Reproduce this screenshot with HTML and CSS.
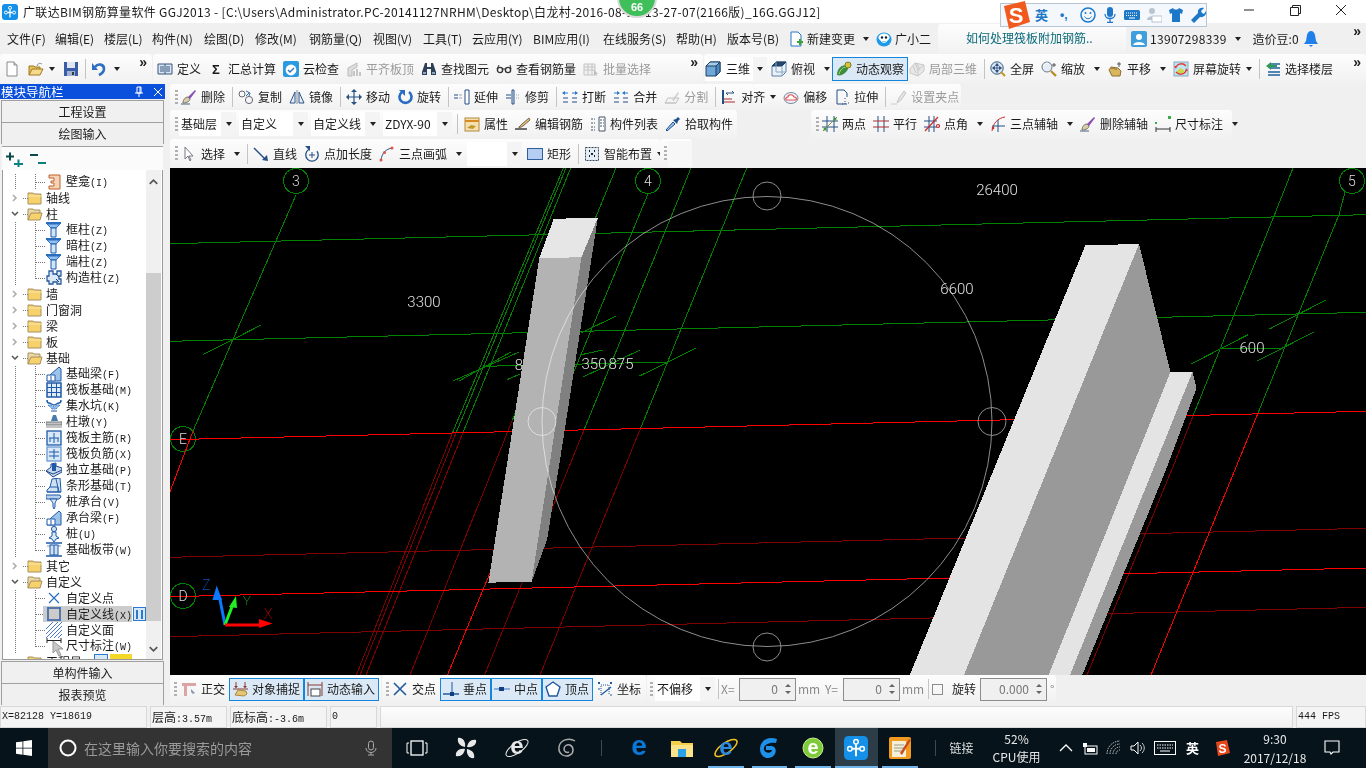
FILE: index.html
```html
<!DOCTYPE html>
<html lang="zh">
<head>
<meta charset="utf-8">
<title>广联达BIM钢筋算量软件 GGJ2013</title>
<link rel="stylesheet" href="styles.css">
</head>
<body>
<svg class="defs" aria-hidden="true">
<defs>
<symbol id="i-new" viewBox="0 0 16 16"><path d="M3 1h7l3 3v11H3z" fill="#fff" stroke="#8a8a8a"/><path d="M10 1v3h3" fill="#ddd" stroke="#8a8a8a"/></symbol>
<symbol id="i-open" viewBox="0 0 16 16"><path d="M1 14V5h5l1 1h5v2" fill="#e8c060" stroke="#a07820"/><path d="M1 14l3-6h11l-3 6z" fill="#f6d98a" stroke="#a07820"/><path d="M9 5c1-3 3-3 5-2" stroke="#7a8aa0" fill="none"/></symbol>
<symbol id="i-save" viewBox="0 0 16 16"><path d="M1 1h14v14H1z" fill="#3a5da8"/><path d="M4 1h8v6H4z" fill="#dfe6f2"/><path d="M4 10h8v5H4z" fill="#9fb2d0"/><path d="M9 11h2v3H9z" fill="#334"/></symbol>
<symbol id="i-undo" viewBox="0 0 16 16"><path d="M4 6c3-4 9-3 9 2 0 3-3 5-5 6" fill="none" stroke="#2e6fc0" stroke-width="2.6"/><path d="M1 2v7h6z" fill="#2e6fc0"/></symbol>
<symbol id="i-def" viewBox="0 0 16 16"><path d="M1 3h14v10H1z" fill="#dbe5f1" stroke="#35577f"/><path d="M3 6h4M3 8h4M3 10h4M9 6h4M9 8h4M9 10h4M8 3v10" stroke="#35577f"/></symbol>
<symbol id="i-cloud" viewBox="0 0 16 16"><rect x="0" y="0" width="16" height="16" rx="2" fill="#2a9be0"/><circle cx="8" cy="9" r="5.4" fill="#fff"/><path d="M5 9l2 2 4-4" stroke="#2a78c0" stroke-width="1.4" fill="none"/></symbol>
<symbol id="i-flush" viewBox="0 0 16 16"><path d="M2 7l9-5v4l-5 3v6H2z" fill="#ddd" stroke="#bbb"/><path d="M7 10h2v5H7zM10 8h2v7h-2zM13 11h2v4h-2z" fill="#c6c6c6"/></symbol>
<symbol id="i-binoc" viewBox="0 0 16 16"><path d="M4 2h2v4h4V2h2l3 9v3h-5V8H6v6H1v-3z" fill="#2f3f55"/><path d="M2 11h3v2H2zM11 11h3v2h-3z" fill="#8fa6c8"/></symbol>
<symbol id="i-glass" viewBox="0 0 16 16"><circle cx="4" cy="9" r="2.6" fill="none" stroke="#333" stroke-width="1.4"/><circle cx="12" cy="9" r="2.6" fill="none" stroke="#333" stroke-width="1.4"/><path d="M6 8h4M1 8l2-4M15 8l-1-4" stroke="#333"/></symbol>
<symbol id="i-batch" viewBox="0 0 16 16"><path d="M1 3h11v11H1z" fill="#f2f2f2" stroke="#c4c4c4"/><path d="M1 6h11M1 9h11M5 3v11M9 3v11" stroke="#c4c4c4"/><path d="M11 9l4 4-2 0 1 2-1 0-1-2-1 1z" fill="#bbb"/></symbol>
<symbol id="i-cube" viewBox="0 0 16 16"><path d="M1 5l4-4h10v10l-4 4H1z" fill="#6fa8d8" stroke="#1d3f66"/><path d="M1 5l4-4h10l-4 4z" fill="#a7cdea" stroke="#1d3f66"/><path d="M11 5v10l4-4V1z" fill="#4f88bd" stroke="#1d3f66"/></symbol>
<symbol id="i-top" viewBox="0 0 16 16"><path d="M1 5l4-4h10v10l-4 4H1z" fill="#eaf2f9" stroke="#5a7fa3"/><path d="M1 5l4-4h10l-4 4z" fill="#27496e" stroke="#1d3f66"/><path d="M11 5v10M5 1v10h10" stroke="#8aa7c4" fill="none"/></symbol>
<symbol id="i-orbit" viewBox="0 0 16 16"><path d="M1 14c0-6 4-10 9-10 3 0 3 4 0 7-3 3-6 4-9 3z" fill="#3d8f3d"/><path d="M3 13c1-4 4-7 7-7" stroke="#a6d98a" fill="none"/><circle cx="12" cy="4" r="3" fill="#d8c43a" stroke="#7a7a20"/></symbol>
<symbol id="i-local" viewBox="0 0 16 16"><path d="M1 8l5-6 9 2v6l-6 5-8-3z" fill="#e8e8e8" stroke="#c8c8c8"/><path d="M6 2l3 7v6M9 9l6-5M4 5l3 7M8 3l3 6" stroke="#c8c8c8" fill="none"/></symbol>
<symbol id="i-full" viewBox="0 0 16 16"><circle cx="7" cy="7" r="6.2" fill="#dbe6f4" stroke="#35577f"/><path d="M7 3v8M3 7h8M7 2.5l-1.500 2h3zM7 11.500l-1.500-2h3zM2.500 7l2-1.500v3zM11.500 7l-2-1.500v3z" stroke="#26487a" fill="#26487a" stroke-width=".8"/><path d="M11 11l4 4" stroke="#c59a20" stroke-width="2"/></symbol>
<symbol id="i-zoom" viewBox="0 0 16 16"><circle cx="6" cy="6" r="5" fill="#e6edf5" stroke="#6a7a8a"/><path d="M3 5c0-2 2-3 4-3" stroke="#fff" fill="none"/><path d="M10 10l5 5" stroke="#b58a20" stroke-width="2.2"/><path d="M13 2v4M11 4h4" stroke="#555"/></symbol>
<symbol id="i-pan" viewBox="0 0 16 16"><path d="M2 9l2-3 7 1 3 3-1 5H5z" fill="#d9b560" stroke="#8a7030"/><path d="M4 8c2-2 4 1 6 0" stroke="#8a7030" fill="none"/><path d="M12 1v5M10 3h4" stroke="#556"/></symbol>
<symbol id="i-rot" viewBox="0 0 16 16"><rect x="1" y="1" width="14" height="14" fill="#bfe4f6" stroke="#8ab"/><path d="M4 10l3-3 4 2v3H4z" fill="#c9d94a"/><path d="M13 5A6 6 0 0 0 3 6M3 11a6 6 0 0 0 10-1" stroke="#e23b2e" stroke-width="1.300" fill="none"/><path d="M1 5l3 0-1 3zM15 10l-3 0 1-3z" fill="#e23b2e"/></symbol>
<symbol id="i-floor" viewBox="0 0 16 16"><path d="M5 3h10M5 7h10M3 11h12M3 14h12" stroke="#1e5f9c" stroke-width="1.300"/><path d="M1 5l5-4v3h6v2H6v3z" fill="#2f9a55"/></symbol>
<symbol id="i-erase" viewBox="0 0 16 16"><path d="M0 15h9" stroke="#47607a"/><path d="M2 14c0-3 2-6 5-6l2 2c0 2-3 4-7 4z" fill="#d9cdb0" stroke="#776"/><path d="M7 8l7-7 1 1-6 8z" fill="#8a4fb0"/></symbol>
<symbol id="i-copy" viewBox="0 0 16 16"><circle cx="4" cy="5" r="3" fill="none" stroke="#667"/><circle cx="11" cy="11" r="3.600" fill="none" stroke="#667"/><path d="M8 2l4 2-1 3M11 4L8 7" stroke="#3a6aa8" fill="none"/></symbol>
<symbol id="i-mirror" viewBox="0 0 16 16"><path d="M6 3L1 14h5zM10 3l5 11h-5z" fill="#e6eef7" stroke="#2f5587"/><path d="M8 1v14" stroke="#889"/></symbol>
<symbol id="i-move" viewBox="0 0 16 16"><path d="M8 1v14M1 8h14" stroke="#26507f" stroke-width="1.200"/><path d="M8 0l3 3H5zM8 16l3-3H5zM0 8l3-3v6zM16 8l-3-3v6z" fill="#26507f"/></symbol>
<symbol id="i-rotb" viewBox="0 0 16 16"><path d="M5 3a6 6 0 1 0 7 0" fill="none" stroke="#2a6cc0" stroke-width="2.600"/><path d="M2 1h6v6z" fill="#2a6cc0"/></symbol>
<symbol id="i-ext" viewBox="0 0 16 16"><path d="M0 6h4M0 9h4" stroke="#234f85" stroke-width="1.200"/><path d="M5 6h3M5 9h3" stroke="#9ab" /><path d="M11 1h4v14h-4z" fill="#fff" stroke="#234f85"/></symbol>
<symbol id="i-trim" viewBox="0 0 16 16"><path d="M1 6h5M1 9h5" stroke="#234f85" stroke-width="1.200"/><path d="M7 1h2v14H7z" fill="#dfe9f5" stroke="#234f85"/><path d="M11 6h4M11 9h4" stroke="#9ab" stroke-dasharray="1 1"/></symbol>
<symbol id="i-break" viewBox="0 0 16 16"><path d="M1 9h5M10 9h5M1 13h5M10 13h5" stroke="#234f85" stroke-width="1.200"/><path d="M1 4h5M10 4h5" stroke="#2a7ad0"/><path d="M0 4l3-2v4zM16 4l-3-2v4z" fill="#2a7ad0"/></symbol>
<symbol id="i-merge" viewBox="0 0 16 16"><path d="M1 9h5M10 9h5M1 13h5M10 13h5" stroke="#234f85" stroke-width="1.200"/><path d="M1 4h5M10 4h5" stroke="#2a7ad0"/><path d="M7 4L4 2v4zM9 4l3-2v4z" fill="#2a7ad0"/></symbol>
<symbol id="i-split" viewBox="0 0 16 16"><path d="M1 14l3-5h11l-3 5zM1 14h11" fill="#f3f3f3" stroke="#c2c2c2"/><path d="M8 11l6-8 1 1-5 8z" fill="#d0d0d0"/></symbol>
<symbol id="i-align" viewBox="0 0 16 16"><path d="M1 1h2v14H1z" fill="#234f85"/><path d="M5 4h8l-2-2M5 4l2 2" fill="none" stroke="#234f85"/><path d="M3 13h11M3 10h8" stroke="#b02a2a" stroke-width="1.200"/></symbol>
<symbol id="i-offs" viewBox="0 0 16 16"><ellipse cx="8" cy="9" rx="7" ry="5.500" fill="#eef" stroke="#7a8a9a"/><path d="M3 11c-1-2 1-3 2-3 0-3 5-3 6 0 2 0 3 2 2 3z" fill="#fff" stroke="#e2524a" stroke-width="1.200"/></symbol>
<symbol id="i-stretch" viewBox="0 0 16 16"><path d="M3 1h7l3 3v4M3 1v14h10" fill="none" stroke="#234f85"/><path d="M11 9v2M11 12v3M14 14h2M8 15h2" stroke="#234f85" stroke-dasharray="1 1"/></symbol>
<symbol id="i-grip" viewBox="0 0 16 16"><path d="M0 15h6" stroke="#ccc"/><path d="M6 14l2-5 5-7 2 2-5 7z" fill="#e4e4e4" stroke="#c6c6c6"/></symbol>
<symbol id="i-prop" viewBox="0 0 16 16"><rect x="1" y="2" width="14" height="13" fill="#f6e0b0" stroke="#b08a40"/><path d="M1 5h14" stroke="#d88a20" stroke-width="2"/><path d="M3 12l4-3 5 1-3 3z" fill="#c09a30"/></symbol>
<symbol id="i-rebar" viewBox="0 0 16 16"><path d="M0 13h12" stroke="#222" stroke-width="1.300"/><path d="M4 11l3-3 7-6 1 2-7 6-4 2z" fill="#e0c070" stroke="#765"/></symbol>
<symbol id="i-list" viewBox="0 0 16 16"><path d="M9 1h6v14H9z" fill="#fff" stroke="#456"/><path d="M1 3h4M1 7h4M1 11h4M1 14h4M10 4h4M10 7h4M10 10h4" stroke="#456" stroke-dasharray="2 1"/></symbol>
<symbol id="i-pick" viewBox="0 0 16 16"><path d="M2 15l-1-1 7-8 2 2z" fill="#9cc6ec" stroke="#1d4f8c"/><path d="M8 4l4 4 1-3 2-2-2-2-2 2z" fill="#1d4f8c"/></symbol>
<symbol id="i-two" viewBox="0 0 16 16"><path d="M5 0v16M12 0v16M0 5h16M0 11h16" stroke="#234f85"/><path d="M1 15L15 1" stroke="#8a8a40"/><circle cx="3" cy="13" r="1.500" fill="#3a9a3a"/><circle cx="13" cy="3" r="1.500" fill="#3a9a3a"/></symbol>
<symbol id="i-par" viewBox="0 0 16 16"><path d="M5 0v16M11 0v16" stroke="#234f85"/><path d="M0 5h16M0 11h16" stroke="#b02a2a"/></symbol>
<symbol id="i-ang" viewBox="0 0 16 16"><path d="M5 0v16M10 0v16M0 5h13M0 11h13" stroke="#234f85"/><path d="M1 15L14 1" stroke="#d02a2a" stroke-width="1.200"/><circle cx="14" cy="10" r="1.500" fill="none" stroke="#d02a2a" stroke-width="1.200"/></symbol>
<symbol id="i-tax" viewBox="0 0 16 16"><path d="M2 15C3 7 8 2 15 1" fill="none" stroke="#d02a2a"/><path d="M8 4v12M2 10h13" stroke="#234f85"/><circle cx="3" cy="12" r="1.300" fill="#d02a2a"/></symbol>
<symbol id="i-dim" viewBox="0 0 16 16"><rect x="0" y="6" width="2" height="2" fill="#3aaa4a"/><rect x="13" y="0" width="3" height="3" fill="#3aaa4a"/><path d="M1 11v5M15 11v5M1 13h14" stroke="#333"/></symbol>
<symbol id="i-sel" viewBox="0 0 16 16"><path d="M4 1v12l3-3 2 5 1-1-2-4h4z" fill="#fff" stroke="#778"/></symbol>
<symbol id="i-line" viewBox="0 0 16 16"><path d="M1 2l12 12" stroke="#234f85" stroke-width="1.500"/><path d="M15 15l-6-1 5-5z" fill="#234f85"/></symbol>
<symbol id="i-ptl" viewBox="0 0 16 16"><circle cx="8" cy="9" r="6.200" fill="none" stroke="#234f85" stroke-width="1.300" stroke-dasharray="26 8"/><path d="M8 6v6M5 9h6" stroke="#234f85"/><path d="M1 0h5v5z" fill="#234f85"/></symbol>
<symbol id="i-arc" viewBox="0 0 16 16"><path d="M2 14C3 7 7 3 13 2" fill="none" stroke="#234f85"/><circle cx="2" cy="14" r="1.500" fill="#e0524a"/><circle cx="5.500" cy="6.500" r="1.500" fill="#e0524a"/><circle cx="13" cy="2" r="1.500" fill="#e0524a"/></symbol>
<symbol id="i-rect" viewBox="0 0 16 16"><rect x="0.500" y="2.500" width="15" height="11" fill="#b4cdf0" stroke="#2f5f9f"/></symbol>
<symbol id="i-smart" viewBox="0 0 16 16"><rect x="1.500" y="1.500" width="13" height="13" fill="#e4ecf6" stroke="#345" stroke-dasharray="2 1"/><path d="M5 5h1M10 5h1M5 10h1M10 10h1M8 7v2" stroke="#123" stroke-width="2"/></symbol>
<symbol id="i-ortho" viewBox="0 0 16 16"><path d="M1 2h14v3H6v10H3V5H1z" fill="#d9a5a5"/><path d="M10 8l4 4-2 1-2-2z" fill="#8a9aaa"/></symbol>
<symbol id="i-snap" viewBox="0 0 16 16"><path d="M4 1v6M13 1v6M1 8h15" stroke="#8a3a30"/><path d="M4 7l-2-2h4zM13 7l-2-2h4z" fill="#8a3a30"/><path d="M3 14l3-5 8 1 1 3-3 2z" fill="#e3c777" stroke="#a88a3a"/></symbol>
<symbol id="i-dyn" viewBox="0 0 16 16"><path d="M1 1v14M15 1v14M1 4h14" stroke="#8a3a30"/><rect x="4" y="8" width="9" height="7" fill="#fff" stroke="#444"/></symbol>
<symbol id="i-x" viewBox="0 0 16 16"><path d="M2 2l12 12M14 2L2 14" stroke="#1f5a9e" stroke-width="1.600"/></symbol>
<symbol id="i-perp" viewBox="0 0 16 16"><path d="M0 13h16" stroke="#1f5a9e" stroke-width="1.500"/><path d="M9 1v12" stroke="#1f5a9e"/><rect x="7" y="11" width="4" height="4" fill="#123f80"/></symbol>
<symbol id="i-mid" viewBox="0 0 16 16"><path d="M0 8h16" stroke="#6e9ad4" stroke-width="1.500"/><rect x="5" y="6" width="5" height="4" fill="#123f80"/></symbol>
<symbol id="i-ver" viewBox="0 0 16 16"><path d="M8 1l7 5-3 9H4L1 6z" fill="#fff" stroke="#1f5a9e" stroke-width="1.400"/></symbol>
<symbol id="i-coord" viewBox="0 0 16 16"><path d="M4 14V4h8v10" fill="none" stroke="#1f5a9e" stroke-dasharray="1 1"/><path d="M4 14l10-8" stroke="#1f5a9e" stroke-width="1.300"/><path d="M1 1l2 2M3 1L1 3M13 1l2 2M15 1l-2 2M1 8h2M13 14h2" stroke="#1f5a9e"/></symbol>
<symbol id="i-changes" viewBox="0 0 16 16"><path d="M3 1h7l3 3v11H3z" fill="#fff" stroke="#2a78c0"/><path d="M9 10h2V8h2v2h2v2h-2v2h-2v-2H9z" fill="#3aa03a"/></symbol>
<symbol id="i-gxe" viewBox="0 0 16 16"><ellipse cx="8" cy="8.500" rx="7.500" ry="7" fill="#1e9be8"/><ellipse cx="8" cy="6.500" rx="5.500" ry="4" fill="#fff"/><circle cx="6" cy="6.500" r="1.200" fill="#123"/><circle cx="10" cy="6.500" r="1.200" fill="#123"/><path d="M5 10c2 2 4 2 6 0" stroke="#fff" fill="none"/></symbol>
<symbol id="i-user" viewBox="0 0 16 16"><rect width="16" height="16" rx="2" fill="#3f9fdc"/><circle cx="8" cy="6" r="3" fill="#fff"/><path d="M2 14c1-4 11-4 12 0z" fill="#fff"/></symbol>
<symbol id="i-bell" viewBox="0 0 16 16"><path d="M8 0c2 0 3 1 4 4l1 6 2 3H1l2-3 1-6c1-3 2-4 4-4z" fill="#1e80e8"/><path d="M6 14h4l-2 2z" fill="#1e80e8"/></symbol>
<symbol id="i-app" viewBox="0 0 16 16"><rect width="16" height="16" rx="3" fill="#1590e8"/><path d="M8 5.500v8M5.500 8.500h5" stroke="#fff" stroke-width="1.300"/><circle cx="8" cy="3.800" r="1.500" fill="none" stroke="#fff"/><circle cx="3.900" cy="8.500" r="1.500" fill="none" stroke="#fff"/><circle cx="12.100" cy="8.500" r="1.500" fill="none" stroke="#fff"/></symbol>
<symbol id="t-niche" viewBox="0 0 16 16"><path d="M3 1h11v14H3v-3h5V9H5V7h3V4H3z" fill="#f4d4b8" stroke="#c0602a"/></symbol>
<symbol id="t-col" viewBox="0 0 16 16"><path d="M0 0h15v2H0z" fill="#2a6cc0"/><path d="M1 2h13L10 6H5z" fill="#8fc1f0" stroke="#2a6cc0"/><path d="M5 6h5v9H5z" fill="#cfe4f8" stroke="#1e5aa8"/></symbol>
<symbol id="t-gz" viewBox="0 0 16 16"><path d="M3 1h4v3h4V1h4v5h-2v3h2v5h-4v-2H7v2H3v-3H1V6h2z" fill="#dbe8f6" stroke="#2a5a9c" stroke-width="1.300"/><path d="M10 4l3 3M10 9l3 3" stroke="#123f80"/></symbol>
<symbol id="t-beam" viewBox="0 0 16 16"><path d="M1 15l3-6 9-8 2 2v12z" fill="#9cc3ea" stroke="#1e5aa8"/><path d="M1 9h8v6H1zM5 10v5" fill="#fff" stroke="#1e5aa8"/></symbol>
<symbol id="t-raft" viewBox="0 0 16 16"><rect x="1" y="1" width="14" height="14" fill="#dfeaf7" stroke="#1e5aa8" stroke-width="1.500"/><path d="M5.500 1v14M10.500 1v14M1 5.500h14M1 10.500h14" stroke="#1e5aa8"/></symbol>
<symbol id="t-pit" viewBox="0 0 16 16"><path d="M1 2c0 3 2 3 2 3 2 0 3 2 5 2s3-2 5-2c0 0 2 0 2-3" fill="none" stroke="#1e5aa8" stroke-width="1.500"/><path d="M2 7l4 4h4l4-4-3 0-3 2-3-2z" fill="#8fc1f0" stroke="#1e5aa8" stroke-dasharray="1 1"/><path d="M5 13h6" stroke="#1e5aa8"/></symbol>
<symbol id="t-pier" viewBox="0 0 16 16"><path d="M7 1h3l2 6H5z" fill="#4a7ab0"/><rect x="0" y="8" width="16" height="3" fill="#c0c4c8" stroke="#777"/><path d="M0 13h16" stroke="#888"/></symbol>
<symbol id="t-r1" viewBox="0 0 16 16"><rect x="1" y="1" width="14" height="14" fill="#d8e8f8" stroke="#1e5aa8" stroke-width="1.300"/><path d="M8 3v10M3 8h10M4 8v4M12 8v4" stroke="#1e5aa8" fill="none"/></symbol>
<symbol id="t-r2" viewBox="0 0 16 16"><rect x="1" y="1" width="14" height="14" fill="#d8e8f8" stroke="#6a9ad0" stroke-width="1.300"/><path d="M8 3v10M3 6h10M3 10h10" stroke="#1e5aa8"/></symbol>
<symbol id="t-iso" viewBox="0 0 16 16"><path d="M0 9l5-4v-3l5-1v3l6 2v4l-9 5z" fill="#c8d8ec" stroke="#1e4a8c"/><path d="M6 2h4v7H6z" fill="#1e5aa8"/><path d="M0 9l7 3 9-4" stroke="#1e4a8c" fill="none"/></symbol>
<symbol id="t-strip" viewBox="0 0 16 16"><path d="M6 1l8-1 1 14H1v-2l3-3z" fill="#cfe0f2" stroke="#1e5aa8"/><path d="M4 9h8v5M1 14h14M10 1l3 13" stroke="#1e5aa8" fill="none"/></symbol>
<symbol id="t-cap" viewBox="0 0 16 16"><path d="M0 1h14l1 2-2 2H0z" fill="#b8d0ec" stroke="#1e5aa8"/><path d="M4 5h7l-2 4v4l-1 2-1-2V9z" fill="#dbe8f6" stroke="#1e5aa8"/></symbol>
<symbol id="t-pile" viewBox="0 0 16 16"><circle cx="8" cy="3" r="2.600" fill="#cfe0f2" stroke="#1e5aa8"/><path d="M6 6h4v4l3 2-3 1-2 3-2-3-3-1 3-2z" fill="#dbe8f6" stroke="#1e5aa8"/></symbol>
<symbol id="t-band" viewBox="0 0 16 16"><path d="M0 1h16M0 14h16" stroke="#1e5aa8" stroke-width="1.500"/><path d="M5 1v13M10 1v13M1 4h14" stroke="#6e9ad4"/><rect x="4" y="3" width="8" height="10" fill="#cfe0f2" stroke="#1e5aa8"/><path d="M8 3v10" stroke="#1e5aa8"/></symbol>
<symbol id="t-pt" viewBox="0 0 16 16"><path d="M3 3l10 10M13 3L3 13" stroke="#2a6cc0" stroke-width="1.200"/></symbol>
<symbol id="t-ln" viewBox="0 0 16 16"><rect x="2" y="2" width="12" height="12" fill="none" stroke="#1e4a8c" stroke-width="1.300"/><path d="M1 1h2v2H1zM13 1h2v2h-2zM1 13h2v2H1zM13 13h2v2h-2z" fill="#2a78e0"/></symbol>
<symbol id="t-ar" viewBox="0 0 16 16"><path d="M0 7l7-7M0 12L12 0M0 16L16 0M4 16L16 4M8 16l8-8M12 16l4-4" stroke="#4a7ad0"/></symbol>
<symbol id="t-dm" viewBox="0 0 16 16"><path d="M1 0v5M15 0v5M1 2.500h14" stroke="#222"/></symbol>
<symbol id="t-cur" viewBox="0 0 16 16"><path d="M1 1v12l3-3 3 6 2-1-3-6h5z" fill="#c8c8c8" stroke="#999"/></symbol>
<symbol id="t-fc" viewBox="0 0 16 16"><path d="M1 3h5l1 1h7v10H1z" fill="#f6d16c" stroke="#a89060"/><path d="M1 6h14" stroke="#fbe8a8"/></symbol>
<symbol id="t-fo" viewBox="0 0 16 16"><path d="M1 14V3h5l1 1h6v3" fill="#e8d8a8" stroke="#a89060"/><path d="M1 14l3-7h11l-2 7z" fill="#f6d16c" stroke="#a89060"/></symbol>
<symbol id="t-clo" viewBox="0 0 8 8"><path d="M2 1l3 3-3 3" fill="none" stroke="#aaa" stroke-width="1.500"/></symbol>
<symbol id="t-ope" viewBox="0 0 8 8"><path d="M1 2l3 3 3-3" fill="none" stroke="#555" stroke-width="1.500"/></symbol>
</defs>
</svg>

<div class="titlebar">
  <svg class="app-ico"><use href="#i-app"/></svg>
  <span class="title-text">广联达BIM钢筋算量软件 GGJ2013 - [C:\Users\Administrator.PC-20141127NRHM\Desktop\白龙村-2016-08-18-13-27-07(2166版)_16G.GGJ12]</span>
  <div class="winbtns">
    <svg class="wb" viewBox="0 1 46 23"><path d="M18 11h10" stroke="#222"/></svg>
    <svg class="wb" viewBox="0 1 46 23"><path d="M18.500 8.500h8v8h-8zM20.500 8.500v-2h8v8h-2" fill="none" stroke="#222"/></svg>
    <svg class="wb" viewBox="0 1 46 23"><path d="M18 6l10 10M28 6L18 16" stroke="#222"/></svg>
  </div>
</div>

<div class="menubar">
  <span class="m w48">文件(F)</span><span class="m w49">编辑(E)</span><span class="m w48">楼层(L)</span><span class="m w52">构件(N)</span><span class="m w51">绘图(D)</span><span class="m w54">修改(M)</span><span class="m w64">钢筋量(Q)</span><span class="m w50">视图(V)</span><span class="m w49">工具(T)</span><span class="m w61">云应用(Y)</span><span class="m w70">BIM应用(I)</span><span class="m w73">在线服务(S)</span><span class="m w51">帮助(H)</span><span class="m w61">版本号(B)</span>
  <span class="it mr2"><svg class="ico"><use href="#i-changes"/></svg><span>新建变更</span><i class="dr"></i></span>
  <span class="it"><svg class="ico"><use href="#i-gxe"/></svg><span>广小二</span></span>
  <span class="qa">如何处理筏板附加钢筋..</span>
  <span class="it"><svg class="ico"><use href="#i-user"/></svg><span class="phone">13907298339</span><i class="dr"></i></span>
  <span class="it bean"><span>造价豆:0</span><svg class="ico"><use href="#i-bell"/></svg></span>
  <span class="more more-end">»</span>
</div>

<div class="row1">
  <div class="tb tb-file">
    <svg class="ico ml4"><use href="#i-new"/></svg>
    <svg class="ico ml8"><use href="#i-open"/></svg><i class="dr"></i>
    <svg class="ico ml8"><use href="#i-save"/></svg>
    <i class="sep"></i>
    <svg class="ico"><use href="#i-undo"/></svg><i class="dr"></i>
    <span class="more more-end">»</span>
  </div>
  <div class="tb tb-calc">
    <span class="it"><svg class="ico"><use href="#i-def"/></svg><span>定义</span></span>
    <span class="it"><b class="sig">Σ</b><span>汇总计算</span></span>
    <span class="it"><svg class="ico"><use href="#i-cloud"/></svg><span>云检查</span></span>
    <span class="it off"><svg class="ico"><use href="#i-flush"/></svg><span>平齐板顶</span></span>
    <span class="it"><svg class="ico"><use href="#i-binoc"/></svg><span>查找图元</span></span>
    <span class="it"><svg class="ico"><use href="#i-glass"/></svg><span>查看钢筋量</span></span>
    <span class="it off"><svg class="ico"><use href="#i-batch"/></svg><span>批量选择</span></span>
    <span class="more more-end">»</span>
  </div>
  <div class="tb tb-view">
    <span class="combo c-3d"><svg class="ico"><use href="#i-cube"/></svg><span class="ct">三维</span><i class="ca"><i class="dr"></i></i></span>
    <span class="it it-tight"><svg class="ico"><use href="#i-top"/></svg><span>俯视</span><i class="dr"></i></span>
    <span class="it sel"><svg class="ico"><use href="#i-orbit"/></svg><span>动态观察</span></span>
    <span class="it off"><svg class="ico"><use href="#i-local"/></svg><span>局部三维</span></span>
    <i class="sep"></i>
    <span class="it"><svg class="ico"><use href="#i-full"/></svg><span>全屏</span></span>
    <span class="it"><svg class="ico"><use href="#i-zoom"/></svg><span>缩放</span><i class="dr"></i></span>
    <span class="it"><svg class="ico"><use href="#i-pan"/></svg><span>平移</span><i class="dr"></i></span>
    <span class="it"><svg class="ico"><use href="#i-rot"/></svg><span>屏幕旋转</span><i class="dr dr-n"></i></span>
    <i class="sep"></i>
    <span class="it"><svg class="ico"><use href="#i-floor"/></svg><span>选择楼层</span></span>
    <span class="more more-end">»</span>
  </div>
</div>

<div class="work">
  <aside class="side">
    <div class="side-head"><span>模块导航栏</span><svg class="pin" viewBox="0 0 12 12"><path d="M4 1h4v6H4zM2 7h8M6 7v4M7 1v6" fill="none" stroke="#fff"/></svg><svg class="close" viewBox="0 0 12 12"><path d="M2 2l8 8M10 2l-8 8" stroke="#fff"/></svg></div>
    <div class="side-btn first">工程设置</div>
    <div class="side-btn">绘图输入</div>
    <div class="side-tools">
      <svg class="pm" viewBox="0 0 20 16"><path d="M0 5.500h8M4 1.500v8" stroke="#0a4a4a" stroke-width="2"/><path d="M8 13h9M12.500 8.500v7.500" stroke="#0a8080" stroke-width="2"/></svg>
      <svg class="pm" viewBox="0 0 20 16"><path d="M1 4h8" stroke="#0a4a4a" stroke-width="2"/><path d="M9 12h8" stroke="#0a8080" stroke-width="2"/></svg>
    </div>
    <div class="tree-wrap">
      <div class="tree">
        <div class="n c"><svg class="ti"><use href="#t-niche"/></svg><span>壁龛<em>(I)</em></span></div>
        <div class="n f"><svg class="ch"><use href="#t-clo"/></svg><svg class="ti"><use href="#t-fc"/></svg><span>轴线</span></div>
        <div class="n f"><svg class="ch"><use href="#t-ope"/></svg><svg class="ti"><use href="#t-fo"/></svg><span>柱</span></div>
        <div class="n c"><svg class="ti"><use href="#t-col"/></svg><span>框柱<em>(Z)</em></span></div>
        <div class="n c"><svg class="ti"><use href="#t-col"/></svg><span>暗柱<em>(Z)</em></span></div>
        <div class="n c"><svg class="ti"><use href="#t-col"/></svg><span>端柱<em>(Z)</em></span></div>
        <div class="n c last"><svg class="ti"><use href="#t-gz"/></svg><span>构造柱<em>(Z)</em></span></div>
        <div class="n f"><svg class="ch"><use href="#t-clo"/></svg><svg class="ti"><use href="#t-fc"/></svg><span>墙</span></div>
        <div class="n f"><svg class="ch"><use href="#t-clo"/></svg><svg class="ti"><use href="#t-fc"/></svg><span>门窗洞</span></div>
        <div class="n f"><svg class="ch"><use href="#t-clo"/></svg><svg class="ti"><use href="#t-fc"/></svg><span>梁</span></div>
        <div class="n f"><svg class="ch"><use href="#t-clo"/></svg><svg class="ti"><use href="#t-fc"/></svg><span>板</span></div>
        <div class="n f"><svg class="ch"><use href="#t-ope"/></svg><svg class="ti"><use href="#t-fo"/></svg><span>基础</span></div>
        <div class="n c"><svg class="ti"><use href="#t-beam"/></svg><span>基础梁<em>(F)</em></span></div>
        <div class="n c"><svg class="ti"><use href="#t-raft"/></svg><span>筏板基础<em>(M)</em></span></div>
        <div class="n c"><svg class="ti"><use href="#t-pit"/></svg><span>集水坑<em>(K)</em></span></div>
        <div class="n c"><svg class="ti"><use href="#t-pier"/></svg><span>柱墩<em>(Y)</em></span></div>
        <div class="n c"><svg class="ti"><use href="#t-r1"/></svg><span>筏板主筋<em>(R)</em></span></div>
        <div class="n c"><svg class="ti"><use href="#t-r2"/></svg><span>筏板负筋<em>(X)</em></span></div>
        <div class="n c"><svg class="ti"><use href="#t-iso"/></svg><span>独立基础<em>(P)</em></span></div>
        <div class="n c"><svg class="ti"><use href="#t-strip"/></svg><span>条形基础<em>(T)</em></span></div>
        <div class="n c"><svg class="ti"><use href="#t-cap"/></svg><span>桩承台<em>(V)</em></span></div>
        <div class="n c"><svg class="ti"><use href="#t-beam"/></svg><span>承台梁<em>(F)</em></span></div>
        <div class="n c"><svg class="ti"><use href="#t-pile"/></svg><span>桩<em>(U)</em></span></div>
        <div class="n c last"><svg class="ti"><use href="#t-band"/></svg><span>基础板带<em>(W)</em></span></div>
        <div class="n f"><svg class="ch"><use href="#t-clo"/></svg><svg class="ti"><use href="#t-fc"/></svg><span>其它</span></div>
        <div class="n f"><svg class="ch"><use href="#t-ope"/></svg><svg class="ti"><use href="#t-fo"/></svg><span>自定义</span></div>
        <div class="n c"><svg class="ti"><use href="#t-pt"/></svg><span>自定义点</span></div>
        <div class="n c cur"><svg class="ti"><use href="#t-ln"/></svg><span class="cur-l">自定义线<em>(X)</em></span><svg class="mini" viewBox="0 0 13 14"><rect x=".5" y=".5" width="12" height="13" fill="#d8e8f8" stroke="#2a78d0"/><path d="M3 3h2v9H3zM8 3h2v9H8z" fill="#2a78d0"/></svg></div>
        <div class="n c"><svg class="ti"><use href="#t-ar"/></svg><span>自定义面</span></div>
        <div class="n c last"><svg class="ti"><use href="#t-dm"/></svg><span>尺寸标注<em>(W)</em></span><svg class="tcur"><use href="#t-cur"/></svg></div>
        <div class="n f"><span class="gap"></span><svg class="ti"><use href="#t-fc"/></svg><span class="nw">工程量</span><svg class="nwi" viewBox="0 0 38 14"><rect x=".5" y=".5" width="13" height="13" fill="#d8e8f8" stroke="#2a78d0"/><path d="M16 0h22v6H16z" fill="#f4d82a"/></svg></div>
      </div>
      <div class="scroll">
        <svg class="sa" viewBox="0 0 16 16"><path d="M4 10l4-4 4 4" fill="none" stroke="#555" stroke-width="1.800"/></svg>
        <div class="st"><div class="sth"></div></div>
        <svg class="sa" viewBox="0 0 16 16"><path d="M4 6l4 4 4-4" fill="none" stroke="#555" stroke-width="1.800"/></svg>
      </div>
    </div>
    <div class="side-btn">单构件输入</div>
    <div class="side-btn">报表预览</div>
  </aside>

  <div class="main">
    <div class="rows">
      <div class="trow r2">
        <div class="tb tb-modify">
          <i class="grip"></i>
          <span class="it"><svg class="ico"><use href="#i-erase"/></svg><span>删除</span></span><i class="sep"></i>
          <span class="it"><svg class="ico"><use href="#i-copy"/></svg><span>复制</span></span>
          <span class="it"><svg class="ico"><use href="#i-mirror"/></svg><span>镜像</span></span><i class="sep"></i>
          <span class="it"><svg class="ico"><use href="#i-move"/></svg><span>移动</span></span>
          <span class="it"><svg class="ico"><use href="#i-rotb"/></svg><span>旋转</span></span><i class="sep"></i>
          <span class="it"><svg class="ico"><use href="#i-ext"/></svg><span>延伸</span></span>
          <span class="it"><svg class="ico"><use href="#i-trim"/></svg><span>修剪</span></span><i class="sep"></i>
          <span class="it"><svg class="ico"><use href="#i-break"/></svg><span>打断</span></span>
          <span class="it"><svg class="ico"><use href="#i-merge"/></svg><span>合并</span></span>
          <span class="it off"><svg class="ico"><use href="#i-split"/></svg><span>分割</span></span><i class="sep"></i>
          <span class="it"><svg class="ico"><use href="#i-align"/></svg><span>对齐</span><i class="dr dr-n"></i></span>
          <span class="it"><svg class="ico"><use href="#i-offs"/></svg><span>偏移</span></span>
          <span class="it"><svg class="ico"><use href="#i-stretch"/></svg><span>拉伸</span></span><i class="sep"></i>
          <span class="it off"><svg class="ico"><use href="#i-grip"/></svg><span>设置夹点</span></span>
        </div>
      </div>
      <div class="trow r3">
        <div class="tb tb-comp">
          <i class="grip"></i>
          <span class="combo c-57"><span class="ct">基础层</span><i class="ca"><i class="dr"></i></i></span>
          <span class="combo c-69"><span class="ct">自定义</span><i class="ca"><i class="dr"></i></i></span>
          <span class="combo c-69"><span class="ct">自定义线</span><i class="ca"><i class="dr"></i></i></span>
          <span class="combo c-69"><span class="ct">ZDYX-90</span><i class="ca"><i class="dr"></i></i></span>
          <i class="sep"></i>
          <span class="it"><svg class="ico"><use href="#i-prop"/></svg><span>属性</span></span>
          <span class="it"><svg class="ico"><use href="#i-rebar"/></svg><span>编辑钢筋</span></span>
          <span class="it"><svg class="ico"><use href="#i-list"/></svg><span>构件列表</span></span>
          <span class="it"><svg class="ico"><use href="#i-pick"/></svg><span>拾取构件</span></span>
        </div>
        <div class="tb tb-aux">
          <i class="grip"></i>
          <span class="it"><svg class="ico"><use href="#i-two"/></svg><span>两点</span></span>
          <span class="it"><svg class="ico"><use href="#i-par"/></svg><span>平行</span></span>
          <span class="it"><svg class="ico"><use href="#i-ang"/></svg><span>点角</span><i class="dr"></i></span>
          <span class="it"><svg class="ico"><use href="#i-tax"/></svg><span>三点辅轴</span><i class="dr"></i></span>
          <span class="it"><svg class="ico"><use href="#i-erase"/></svg><span>删除辅轴</span></span>
          <span class="it"><svg class="ico"><use href="#i-dim"/></svg><span>尺寸标注</span><i class="dr"></i></span>
        </div>
      </div>
      <div class="trow r4">
        <div class="tb tb-draw">
          <i class="grip"></i>
          <span class="it it-sel"><svg class="ico"><use href="#i-sel"/></svg><span>选择</span><i class="dr"></i></span><i class="sep"></i>
          <span class="it"><svg class="ico"><use href="#i-line"/></svg><span>直线</span></span>
          <span class="it"><svg class="ico"><use href="#i-ptl"/></svg><span>点加长度</span></span>
          <span class="it"><svg class="ico"><use href="#i-arc"/></svg><span>三点画弧</span><i class="dr"></i></span>
          <span class="combo c-55"><span class="ct"></span><i class="ca"><i class="dr"></i></i></span>
          <span class="it"><svg class="ico"><use href="#i-rect"/></svg><span>矩形</span></span><i class="sep"></i>
          <span class="it"><svg class="ico"><use href="#i-smart"/></svg><span>智能布置</span><i class="dr dr-n"></i></span>
        </div>
        <div class="tb tb-blank"><i class="grip"></i><span class="blank"></span></div>
      </div>
    </div>

    <svg class="canvas" viewBox="170 168 1196 507" preserveAspectRatio="none">
      <g class="crisp" fill="none" stroke="#008200">
        <path d="M170 243.700L1366 214.700M170 341.300L1366 312.300"/>
        <path d="M296 195L193 431M648 194L512 520M616 168L512.500 419.700M691 168L584 430M746.700 168L640.700 428"/>
        <path d="M563.400 168L452.400 433M566 168L456 433M570.700 168L462.800 433"/>
        <path d="M1293 168L1274 216L1234 314.700L1193.500 414.700M1345 192L1339 214.700L1258 413"/>
        <path d="M484 366.300L667.500 362M1220 348.300L1283 348"/>
        <path d="M203 354.700L260.700 325.300M616 316L581 333M453 381L519 352M459 381L511 352M507 379.700L520 374M583 377L640 350M580 355L603 350M639.600 376L696 348M1191.600 363.700L1248 334.700M1257 361L1313.500 332.300M1269.500 329L1326.600 299.700"/>
        <circle cx="296" cy="181" r="12.500"/><circle cx="648" cy="181" r="12.500"/><circle cx="1352" cy="181" r="12.500"/><circle cx="183" cy="439" r="12.500"/><circle cx="183" cy="596" r="12.500"/>
      </g>
      <g class="crisp" fill="none" stroke="#7f0000">
        <path d="M170 557.300L1366 528.300M170 636.700L1366 607.300"/>
        <path d="M512.500 419.700L410 675M584 430L484.600 675M640.700 428L540 675"/>
        <path d="M452.400 433L356.400 675M456 433L360 675M462.800 433L366 675"/>
        <path d="M1193.500 414.700L1172.500 468L1087 675"/>
      </g>
      <g class="crisp" fill="none" stroke="#f00">
        <path d="M170 439.700L1366 411.300M170 596.700L1366 568"/>
        <path d="M193 431L170 491.700M512 520L447.500 675M1258 413L1235.700 468L1151 675"/>
      </g>
      <g class="dimt">
        <text x="424" y="307">3300</text><text x="997" y="195">26400</text><text x="957" y="294">6600</text><text x="1252" y="353">600</text><text x="594" y="369">350</text><text x="621" y="369">875</text><text x="519" y="370">8</text>
      </g>
      <g class="axt">
        <text x="296" y="186">3</text><text x="648" y="186">4</text><text x="1352" y="186">5</text><text x="183" y="444">E</text><text x="183" y="601">D</text>
      </g>
      <g class="crisp">
        <path d="M553.800 218.700L597.800 218L581.400 257.300L539.300 258z" fill="#e6e6e6"/>
        <path d="M539.300 258L581.400 257.300L531.600 581.700L488.400 582.700z" fill="#b3b3b3"/>
        <path d="M597.800 218L581.400 257.300L531.600 581.700L547 540L560 460z" fill="#808080"/>
        <path d="M1085.400 245.300L1139 244L964 675H909.800z" fill="#e4e4e4"/>
        <path d="M1139 244L1170.500 372L1048.600 675H964z" fill="#999"/>
        <path d="M1170.500 372H1192.400L1070 675H1048.600z" fill="#e4e4e4"/>
        <path d="M1192.400 372L1196.600 388L1166.700 468L1082.300 675H1070z" fill="#999"/>
      </g>
      <g class="ring" fill="none" stroke="#8c8c8c">
        <circle cx="767" cy="421.500" r="225"/>
        <circle cx="767" cy="196" r="14"/><circle cx="992" cy="421.500" r="14"/><circle cx="767" cy="647" r="14"/><circle cx="542" cy="421.500" r="14"/>
      </g>
      <g>
        <path d="M225 625L219.500 597" stroke="#0a78ff" stroke-width="3"/><path d="M216.700 585.500L212.500 600H222z" fill="#0a78ff"/>
        <path d="M225 625L233 604" stroke="#22ee22" stroke-width="3"/><path d="M236 596L229 607L237 608z" fill="#22ee22"/>
        <path d="M225 625H262" stroke="#f00" stroke-width="3"/><path d="M272.600 623.500L259 619V628z" fill="#f00"/>
        <text class="ax-z" x="202" y="590">Z</text><text class="ax-y" x="243" y="605">Y</text><text class="ax-x" x="264" y="619">X</text>
      </g>
    </svg>

    <div class="trow rb">
      <div class="tb tb-snap">
        <i class="grip"></i>
        <span class="it it-tight"><svg class="ico"><use href="#i-ortho"/></svg><span>正交</span></span>
        <span class="it sel seg s75"><svg class="ico"><use href="#i-snap"/></svg><span>对象捕捉</span></span>
        <span class="it sel seg s75"><svg class="ico"><use href="#i-dyn"/></svg><span>动态输入</span></span>
      </div>
      <div class="tb tb-snap2">
        <i class="grip"></i>
        <span class="it it-tight"><svg class="ico"><use href="#i-x"/></svg><span>交点</span></span>
        <span class="it sel seg s51"><svg class="ico"><use href="#i-perp"/></svg><span>垂点</span></span>
        <span class="it sel seg s51"><svg class="ico"><use href="#i-mid"/></svg><span>中点</span></span>
        <span class="it sel seg s51"><svg class="ico"><use href="#i-ver"/></svg><span>顶点</span></span>
        <span class="it it-coord"><svg class="ico"><use href="#i-coord"/></svg><span>坐标</span></span>
      </div>
      <div class="tb tb-offset">
        <i class="grip"></i>
        <span class="combo c-60"><span class="ct">不偏移</span><i class="ca"><i class="dr"></i></i></span>
        <i class="sep s-0"></i>
        <span class="lbl lx">X=</span>
        <span class="spin s57"><span>0</span><i class="arr"><i class="up"></i><i class="dn"></i></i></span>
        <span class="lbl lm">mm</span>
        <span class="lbl ly">Y=</span>
        <span class="spin s57"><span>0</span><i class="arr"><i class="up"></i><i class="dn"></i></i></span>
        <span class="lbl lm">mm</span>
        <i class="sep s-1"></i>
        <i class="check"></i>
        <span class="lbl dark">旋转</span>
        <span class="spin s67"><span>0.000</span><i class="arr"><i class="up"></i><i class="dn"></i></i></span>
        <span class="lbl ldeg">°</span>
      </div>
    </div>
  </div>
</div>

<div class="status">
  <span class="cell c147">X=82128 Y=18619</span>
  <span class="cell c77"><u>层高</u>:3.57m</span>
  <span class="cell c97"><u>底标高</u>:-3.6m</span>
  <span class="cell c47">0</span>
  <span class="cell cgrow"></span>
  <span class="cell c70">444 FPS</span>
</div>

<div class="taskbar">
  <div class="start"><svg class="win" viewBox="0 0 16 16"><path d="M0 2.300l6.500-.9v6.300H0zM7.300 1.300L16 0v7.700H7.300zM0 8.500h6.500v6.200L0 13.800zM7.300 8.500H16V16l-8.700-1.200z" fill="#fff"/></svg></div>
  <div class="search">
    <svg class="sc" viewBox="0 0 18 18"><circle cx="9" cy="9" r="7.500" fill="none" stroke="#fff" stroke-width="2"/></svg>
    <span class="st-text">在这里输入你要搜索的内容</span>
    <svg class="mic" viewBox="0 0 16 16"><rect x="5.500" y="1" width="5" height="9" rx="2.500" fill="none" stroke="#aaa"/><path d="M3 8c0 6 10 6 10 0M8 12v3M5 15h6" fill="none" stroke="#aaa"/></svg>
  </div>
  <div class="tasks">
    <span class="tk t-first"><svg class="tv" viewBox="0 0 22 16"><rect x="5" y="1" width="12" height="14" fill="none" stroke="#fff" stroke-width="1.300"/><path d="M3 3H1v10h2M19 3h2v10h-2" fill="none" stroke="#fff"/></svg></span>
    <span class="tk pin-t"><svg class="ti24" viewBox="0 0 24 24"><g fill="#e8e8e8"><path d="M11 11C6 10 3 7 4 2c4-1 8 3 7 9z"/><path d="M13 11c1-5 4-8 9-7 1 4-3 8-9 7z"/><path d="M13 13c5 1 8 4 7 9-4 1-8-3-7-9z"/><path d="M11 13c-1 5-4 8-9 7-1-4 3-8 9-7z"/></g></svg></span>
    <span class="tk pin-t"><svg class="ti24" viewBox="0 0 24 24"><ellipse cx="12" cy="12" rx="13" ry="5" fill="none" stroke="#e8e8e8" transform="rotate(-35 12 12)"/><text x="12" y="18" class="e-w">e</text></svg></span>
    <span class="tk pin-t"><svg class="ti24" viewBox="0 0 24 24"><path d="M20 5C14 1 5 4 4 11c-1 7 6 11 11 8 4-2 4-8 0-10-3-1-6 1-6 4s3 4 5 3" fill="none" stroke="#aaa" stroke-width="1.500"/></svg></span>
    <i class="tsep ts1"></i>
    <span class="tk"><svg class="ti24" viewBox="0 0 24 24"><text x="12" y="19" class="e-b">e</text></svg></span>
    <span class="tk"><svg class="ti24" viewBox="0 0 24 24"><path d="M1 5h9l2 2h11v14H1z" fill="#f4d04a"/><path d="M1 9h22v12H1z" fill="#fbe38a"/><path d="M8 13h8v8H8z" fill="#2aa0e8"/></svg></span>
    <span class="tk run"><svg class="ti24" viewBox="0 0 24 24"><ellipse cx="12" cy="12" rx="13" ry="5" fill="none" stroke="#f0c020" stroke-width="1.500" transform="rotate(-35 12 12)"/><text x="12" y="19" class="e-ie">e</text></svg></span>
    <span class="tk run"><svg class="ti24" viewBox="0 0 24 24"><path d="M20 3C10 0 3 5 3 13c0 7 6 11 12 8 5-3 5-10 0-11H9v4h6c0 3-6 4-8 0-1-5 5-8 12-7z" fill="#1e90e8"/></svg></span>
    <span class="tk run"><svg class="ti24" viewBox="0 0 24 24"><circle cx="12" cy="12" r="10" fill="#7ecb3a" stroke="#c8f090"/><text x="12" y="18" class="e-g">e</text></svg></span>
    <span class="tk run act"><svg class="ti24"><use href="#i-app"/></svg></span>
    <span class="tk run"><svg class="ti24" viewBox="0 0 24 24"><rect x="1" y="1" width="22" height="22" rx="2" fill="#f09a20"/><rect x="4" y="5" width="14" height="16" fill="#f6efd8"/><path d="M6 9h10M6 12h10M6 15h8" stroke="#998"/><path d="M12 17l9-14 2 1-9 15z" fill="#c9501e"/></svg></span>
    <i class="tsep ts2"></i>
  </div>
  <span class="lnk">链接</span>
  <div class="cpu"><span>52%</span><span>CPU使用</span></div>
  <div class="tray">
    <svg class="tr" viewBox="0 0 16 16"><path d="M2 11l6-6 6 6" fill="none" stroke="#fff" stroke-width="1.300"/></svg>
    <svg class="tr" viewBox="0 0 16 16"><rect x="3" y="6" width="12" height="8" fill="none" stroke="#fff"/><rect x="5" y="8" width="8" height="4" fill="#fff"/><path d="M1 3h4v4H1z" fill="#fff"/></svg>
    <svg class="tr" viewBox="0 0 16 16"><path d="M1 14A13 13 0 0 1 14 1M4 14A10 10 0 0 1 14 4M7 14a7 7 0 0 1 7-7M10 14a4 4 0 0 1 4-4" fill="none" stroke="#ccc" stroke-dasharray="1.500 1"/></svg>
    <svg class="tr" viewBox="0 0 16 16"><path d="M1 6h3l4-4v12l-4-4H1z" fill="none" stroke="#fff"/><path d="M10 5c2 2 2 4 0 6M12 3c3 3 3 7 0 10" fill="none" stroke="#ccc"/></svg>
    <svg class="tr kb" viewBox="0 0 22 16"><rect x=".5" y="1.500" width="21" height="13" fill="none" stroke="#fff"/><path d="M3 5h16M3 8h16" stroke="#fff" stroke-dasharray="1.500 1"/><path d="M6 11h10" stroke="#fff"/></svg>
    <span class="ying">英</span>
    <svg class="tr" viewBox="0 0 16 16"><path d="M2 2l11-2 3 13-12 3z" fill="#e8471c"/><text x="8.500" y="13" class="sg">S</text></svg>
  </div>
  <div class="clock"><span>9:30</span><span>2017/12/18</span></div>
  <svg class="notif" viewBox="0 0 16 16"><path d="M1 1h14v11H9l-2 2-1-2H1z" fill="none" stroke="#fff" stroke-width="1.100"/></svg>
</div>

<div class="badge"><span>66</span></div>
<div class="ime">
  <svg class="ime-logo" viewBox="0 0 28 28"><path d="M2 5l21-5 5 21-21 7z" fill="#f05a1e"/><text x="14" y="22" class="ime-s">S</text></svg>
  <span class="ime-y">英</span>
  <span class="ime-p">•,</span>
  <svg class="ime-i" viewBox="0 0 16 16"><circle cx="8" cy="8" r="7" fill="none" stroke="#1e78c8" stroke-width="1.500"/><circle cx="5.500" cy="6" r="1" fill="#1e78c8"/><circle cx="10.500" cy="6" r="1" fill="#1e78c8"/><path d="M4.500 9.500c2 3 5 3 7 0" fill="none" stroke="#1e78c8"/></svg>
  <svg class="ime-i" viewBox="0 0 16 16"><rect x="5" y="0" width="6" height="10" rx="3" fill="#1e78c8"/><path d="M3 7c0 6 10 6 10 0M8 12v3M5 15.500h6" fill="none" stroke="#1e78c8" stroke-width="1.300"/></svg>
  <svg class="ime-i" viewBox="0 0 16 16"><rect x="0" y="3" width="16" height="10" rx="1.500" fill="#1e78c8"/><path d="M2 6h12M2 8.500h12" stroke="#fff" stroke-dasharray="1 1"/><path d="M5 11h6" stroke="#fff"/></svg>
  <svg class="ime-i" viewBox="0 0 16 16"><circle cx="6" cy="4" r="3" fill="#b8c4d0"/><path d="M1 13c0-5 10-5 10 0z" fill="#b8c4d0"/><rect x="6" y="9" width="10" height="6" fill="#fff" stroke="#b8c4d0"/></svg>
  <svg class="ime-i" viewBox="0 0 16 16"><path d="M1 3l4-2c1 2 5 2 6 0l4 2-1 4-2-1v9H4V6L2 7z" fill="#1e78c8"/></svg>
  <svg class="ime-i" viewBox="0 0 16 16"><path d="M1 13l7-7c-1-4 3-6 6-5l-3 3 1 2 2 1 2-3c1 3-2 7-6 6l-6 6z" fill="#1e78c8"/></svg>
</div>
</body>
</html>
```
FILE: styles.css
```css
* { box-sizing: border-box; }
html, body { margin: 0; padding: 0; }
body {
  width: 1366px; height: 768px; overflow: hidden; position: relative;
  display: flex; flex-direction: column;
  background: #f0f0f0; color: #1a1a1a;
  font: 12px/16px "Noto Sans CJK SC", "Noto Sans", sans-serif;
}
.defs { width: 0; height: 0; position: absolute; }
.ico { width: 16px; height: 16px; flex: none; }
i { font-style: normal; display: block; }

.titlebar { height: 23px; background: #fff; display: flex; align-items: center; flex: none; }
.app-ico { width: 16px; height: 16px; margin: 0 5px 0 2px; flex: none; }
.title-text { white-space: nowrap; font-size: 12px; letter-spacing: .33px; }
.winbtns { margin-left: auto; margin-right: 2px; display: flex; }
.wb { width: 46px; height: 23px; }

.menubar { height: 31px; display: flex; align-items: center; padding-left: 7px; flex: none; position: relative; }
.m { white-space: nowrap; flex: none; }
.w48 { width: 48px; } .w49 { width: 49px; } .w50 { width: 50px; } .w51 { width: 51px; } .w52 { width: 52px; }
.w54 { width: 54px; } .w61 { width: 61px; } .w64 { width: 64px; } .w70 { width: 70px; } .w73 { width: 73px; }
.it { display: flex; align-items: center; gap: 4px; margin-right: 8px; white-space: nowrap; flex: none; height: 22px; }
.menubar .it { gap: 3px; }
.menubar .bean { gap: 4px; margin-left: 4px; }
.phone { letter-spacing: .3px; }
.mr2 { margin-right: 7px; }
.qa { width: 188px; height: 29px; margin: 0 5px 0 -1px; flex: none; text-align: left; padding: 6px 0 0 28px; color: #0a6a7a;
  background: linear-gradient(#fdfdfd, #f2f2f2); border-radius: 3px; white-space: nowrap; }
.dr { width: 0; height: 0; border: 3.5px solid transparent; border-top: 4px solid #222; border-bottom: 0; margin-left: 5px; flex: none; }
.dr-n { margin-left: 1px; }
.more { font: 14px/10px "Liberation Sans", sans-serif; color: #222; font-weight: bold; }
.more-end { margin-left: auto; margin-right: 5px; align-self: flex-start; padding-top: 3px; }

.row1 { height: 30px; display: flex; flex: none; gap: 1px; }
.tb { display: flex; align-items: center; height: 100%; flex: none; white-space: nowrap;
  background: linear-gradient(#fdfdfd, #f1f1f1); border-radius: 3px; }
.off { color: #9a9a9a; }
.tb-file { width: 152px; }
.ml4 { margin-left: 4px; }
.ml8 { margin-left: 8px; }
.tb-file .dr { margin-left: 5px; }
.tb-file .sep { margin: 0 5px 0 6px; }
.tb-file .sep + .ico + .dr { margin-left: 7px; }
.tb-calc { width: 550px; padding-left: 4px; }
.tb-calc .it, .tb-view .it, .tb-modify .it, .tb-comp .it, .tb-aux .it, .tb-draw .it { margin-right: 7px; }
.tb-view { flex: 1; padding-left: 1px; }
.sep { width: 1px; height: 20px; background: #c4c4c4; margin: 0 5px 0 0; flex: none; }
.sig { width: 16px; text-align: center; font: bold 13px "Liberation Sans", sans-serif; }

.combo { display: flex; align-items: center; height: 24px; background: #fff; flex: none; margin-right: 3px; }
.ct { flex: 1; padding-left: 2px; }
.ca { width: 15px; height: 100%; background: #f4f4f4; display: flex; align-items: center; justify-content: center; }
.ca .dr { margin: 0; }
.c-3d { width: 62px; gap: 3px; margin-right: 4px; }
.c-57 { width: 57px; } .c-69 { width: 69px; } .c-55 { width: 55px; margin: 0 5px 0 -2px; } .c-60 { width: 60px; margin-right: 1px; }
.tb-view .it-tight { margin-right: 2px; }
.sel { background: #dbe9f6; border: 1px solid #1286dc; height: 24px; padding: 0 3px; }
.tb-view .sel { margin-right: 1px; }

.work { flex: 1; display: flex; min-height: 0; }
.side { width: 165px; flex: none; margin-right: 5px; display: flex; flex-direction: column; height: 621px; }
.side-head { height: 15px; background: #0a50dc; color: #fff; font: 12.500px/15px "Noto Sans CJK SC", sans-serif; display: flex; align-items: center; padding-left: 1px; position: relative; flex: none; }
.pin { width: 12px; height: 12px; margin-left: 69px; flex: none; }
.close { width: 12px; height: 12px; margin-left: 7px; flex: none; }
.side-btn { height: 22px; flex: none; border: 1px solid #a0a0a0; border-width: 1px 1px 0 1px; margin: 0 1px; text-align: center; line-height: 21px; background: #f0f0f0; }
.side-btn.first { margin-top: 1px; }
.side-tools { height: 24px; margin: 2px 2px 0; display: flex; align-items: center; gap: 3px; padding-left: 4px; background: #fbfbfb; flex: none; border-top: 1px solid #a0a0a0; }
.pm { width: 20px; height: 16px; }
.tree-wrap { flex: 1; display: flex; min-height: 0; margin: 0 2px 1px; border: 1px solid #9a9a9a; border-top: 0; background: #fff; }
.tree { flex: 1; overflow: hidden; padding-top: 4px; min-width: 0; font: 12px/16px "Noto Sans CJK SC", sans-serif; }
.n { height: 16px; display: flex; align-items: center; white-space: nowrap; position: relative; overflow: visible; }
.n em { font: normal 10px/16px "Liberation Mono", monospace; }
.f { padding-left: 8px;
  background: repeating-linear-gradient(to right, #777 0 1px, transparent 1px 2px) 20px 8px / 5px 1px no-repeat; }
.ch { width: 8px; height: 8px; flex: none; }
.gap { width: 8px; flex: none; }
.f .ti { margin: 0 3px 0 8px; }
.c { padding-left: 43px;
  background:
    repeating-linear-gradient(to bottom, #777 0 1px, transparent 1px 2px) 12px 0 / 1px 100% no-repeat,
    repeating-linear-gradient(to bottom, #777 0 1px, transparent 1px 2px) 32px 0 / 1px 100% no-repeat,
    repeating-linear-gradient(to right, #777 0 1px, transparent 1px 2px) 33px 8px / 10px 1px no-repeat; }
.c.last { background:
    repeating-linear-gradient(to bottom, #777 0 1px, transparent 1px 2px) 12px 0 / 1px 100% no-repeat,
    repeating-linear-gradient(to bottom, #777 0 1px, transparent 1px 2px) 32px 0 / 1px 9px no-repeat,
    repeating-linear-gradient(to right, #777 0 1px, transparent 1px 2px) 33px 8px / 10px 1px no-repeat; }
.ti { width: 16px; height: 16px; flex: none; margin-right: 4px; }
.cur-l { background: #ccc; height: 16px; margin-left: -23px; padding-left: 23px; width: 89px; flex: none; overflow: hidden; }
.cur .ti { position: relative; z-index: 1; }
.mini { width: 13px; height: 14px; margin-left: 1px; flex: none; }
.tcur { position: absolute; left: 49px; top: 2px; width: 16px; height: 16px; }
.nw { width: 48px; flex: none; }
.nwi { width: 38px; height: 14px; flex: none; align-self: flex-start; }
.scroll { width: 15px; margin-right: 1px; flex: none; display: flex; flex-direction: column; background: #f0f0f0; }
.sa { width: 15px; height: 16px; flex: none; margin-top: 4px; }
.sa:last-child { margin-top: 0; margin-bottom: 2px; }
.st { flex: 1; padding: 83px 0 20px; }
.sth { height: 100%; background: #cdcdcd; }

.main { flex: 1; min-width: 0; display: flex; flex-direction: column; }
.rows { height: 84px; flex: none; }
.trow { display: flex; }
.r2 { height: 26px; }
.r3 { height: 28px; justify-content: space-between; }
.r4 { height: 30px; padding-top: 1px; }
.grip { width: 3px; height: 15px; margin: 0 3px 0 5px; flex: none;
  background: repeating-linear-gradient(to bottom, #b0b0b0 0 2px, transparent 2px 4px); }
.tb-comp .grip, .tb-draw .grip { margin-right: 1px; }
.tb-modify { width: 791px; }
.tb-comp { width: 567px; }
.tb-comp .sep { margin-left: 2px; margin-right: 6px; }
.tb-aux { width: 421px; margin-right: 134px; }
.tb-draw { width: 490px; }
.tb-blank { width: 32px; }
.tb-blank .grip { margin: 0 1px 0 4px; }
.blank { width: 24px; height: 26px; background: #f7f7f7; }
.it-sel .ico { margin-left: 2px; }

.canvas { width: 1196px; height: 507px; flex: none; background: #000; display: block; }
.crisp { shape-rendering: crispEdges; }
.ring { mix-blend-mode: screen; }
.dimt text { font: 300 15px Roboto, "Liberation Sans", sans-serif; fill: #e0e0e0; text-anchor: middle; }
.axt text { font: 300 14px Roboto, "Liberation Sans", sans-serif; fill: #ddd; text-anchor: middle; }
.ax-z { font: 100 14px Roboto, sans-serif; fill: #0a78ff; }
.ax-y { font: 100 13px Roboto, sans-serif; fill: #22ee22; }
.ax-x { font: 100 14px Roboto, sans-serif; fill: #f00; }

.rb { height: 30px; gap: 1px; flex: none; }
.rb .tb { height: 28px; }
.rb .grip { margin: 0 3px 0 4px; }
.tb-snap .grip { margin-right: 4px; }
.rb .sel { margin: 0; padding: 0 2px; height: 23px; }
.seg { justify-content: flex-start; }
.s75 { width: 75px; } .s51 { width: 51px; }
.tb-snap { width: 211px; }
.tb-snap .it-tight { margin-right: 4px; }
.tb-snap2 { width: 264px; }
.tb-snap2 .it-tight { margin: 0 4px 0 0; }
.it-coord { margin: 0 0 0 4px; }
.tb-offset { width: 409px; }
.tb-offset .grip { margin: 0 2px 0 3px; }
.s-0 { margin: 0 2px; height: 20px; }
.s-1 { margin: 0 0 0 1px; height: 20px; }
.lbl { color: #8a8a8a; flex: none; }
.lx { width: 18px; }
.ly { width: 20px; padding-left: 2px; }
.lm { width: 27px; padding-left: 2px; }
.ldeg { margin-left: 3px; }
.lbl.dark { color: #222; margin: 0 4px 0 9px; }
.spin { height: 23px; border: 1px solid #8c8c8c; background: #f0f0f0; display: flex; align-items: center; justify-content: flex-end; color: #777; flex: none; }
.s57 { width: 57px; } .s67 { width: 67px; }
.spin .arr { width: 14px; height: 100%; display: flex; flex-direction: column; justify-content: center; align-items: center; gap: 4px; margin-left: 3px; }
.up { border: 3px solid transparent; border-top: 0; border-bottom: 3px solid #666; }
.dn { border: 3px solid transparent; border-bottom: 0; border-top: 3px solid #666; }
.check { width: 11px; height: 11px; border: 1px solid #8c8c8c; margin-left: 3px; flex: none; }

.status { height: 23px; flex: none; display: flex; gap: 3px; }
.cell { height: 22px; margin-top: 1px; border: 1px solid #d8d8d8; padding: 0 1px; line-height: 20px; white-space: nowrap; flex: none; font: 10px/20px "Liberation Mono", monospace; background: #f4f4f4; }
.cell u { font: 12px/20px "Noto Sans CJK SC", sans-serif; text-decoration: none; }
.c147 { width: 147px; } .c77 { width: 77px; } .c97 { width: 97px; } .c47 { width: 47px; } .c70 { width: 70px; }
.cgrow { flex: 1; background: linear-gradient(#fdfdfd, #f1f1f1); }

.taskbar { height: 40px; flex: none; background: #06131a; display: flex; align-items: center; color: #e8e8e8; position: relative; }
.start { width: 48px; display: flex; justify-content: center; flex: none; }
.win { width: 16px; height: 16px; }
.search { width: 344px; height: 40px; background: #333; display: flex; align-items: center; flex: none; color: #9a9a9a; font-size: 14px; }
.sc { width: 18px; height: 18px; margin: 0 7px 0 11px; flex: none; }
.st-text { flex: 1; }
.mic { width: 16px; height: 16px; margin-right: 13px; }
.tasks { display: flex; align-items: center; height: 40px; flex: none; }
.tk { width: 43.500px; height: 40px; display: flex; align-items: center; justify-content: center; flex: none; position: relative; }
.t-first { width: 49px; }
.pin-t { width: 50.500px; }
.tv { width: 22px; height: 16px; }
.ti24 { width: 24px; height: 24px; overflow: visible; }
.tsep { width: 1px; height: 16px; background: #445; flex: none; }
.ts1 { margin: 0 15.500px 0 8px; }
.ts2 { margin-left: 13px; }
.e-w, .e-b, .e-ie, .e-g { font: bold 24px "Liberation Sans", sans-serif; text-anchor: middle; }
.e-w { fill: #e8e8e8; }
.e-b { fill: #0a78d7; font-size: 28px; }
.e-ie { fill: #2a8ae0; }
.e-g { fill: #fff; font-size: 20px; }
.run::after { content: ""; position: absolute; left: 4px; right: 4px; bottom: 0; height: 2px; background: #6fb4ea; }
.act { background: #2d3d47; }
.act::after { left: 0; right: 0; }
.lnk { width: 52px; flex: none; text-align: center; color: #ddd; }
.cpu { width: 58px; flex: none; display: flex; flex-direction: column; align-items: center; line-height: 18px; }
.tray { display: flex; align-items: center; gap: 8px; flex: none; width: 193.500px; padding-left: 12.500px; }
.tr { width: 16px; height: 16px; flex: none; }
.kb { width: 22px; }
.ying { font-weight: bold; color: #fff; font-size: 13px; margin: 0 7px 0 2px; }
.sg { font: bold 12px "Liberation Sans", sans-serif; fill: #fff; text-anchor: middle; }
.clock { width: 72px; flex: none; display: flex; flex-direction: column; align-items: center; line-height: 19px; }
.notif { width: 16px; height: 16px; margin-left: 13px; flex: none; }

.badge { position: absolute; left: 617px; top: -22px; width: 40px; height: 40px; border-radius: 50%; background: #3fbf5a; border: 2px solid #d9d9d9; color: #fff; font: bold 11px/16px "Liberation Sans", sans-serif; text-align: center; padding-top: 19px; }
.ime { position: absolute; left: 1000px; top: 3px; width: 207px; height: 24px; display: flex; align-items: center; gap: 6px; background: #f4f7fb; border: 1px solid #b8c6d4; padding-left: 34px; }
.ime-logo { position: absolute; left: 1px; top: -3px; width: 28px; height: 28px; }
.ime-s { font: bold 22px "Liberation Sans", sans-serif; fill: #fff; text-anchor: middle; }
.ime-y { color: #1e78c8; font-weight: bold; font-size: 13px; margin-right: 6px; }
.ime-p { color: #1e78c8; font: bold 12px "Liberation Sans", sans-serif; width: 14px; }
.ime-i { width: 16px; height: 16px; flex: none; }
```
